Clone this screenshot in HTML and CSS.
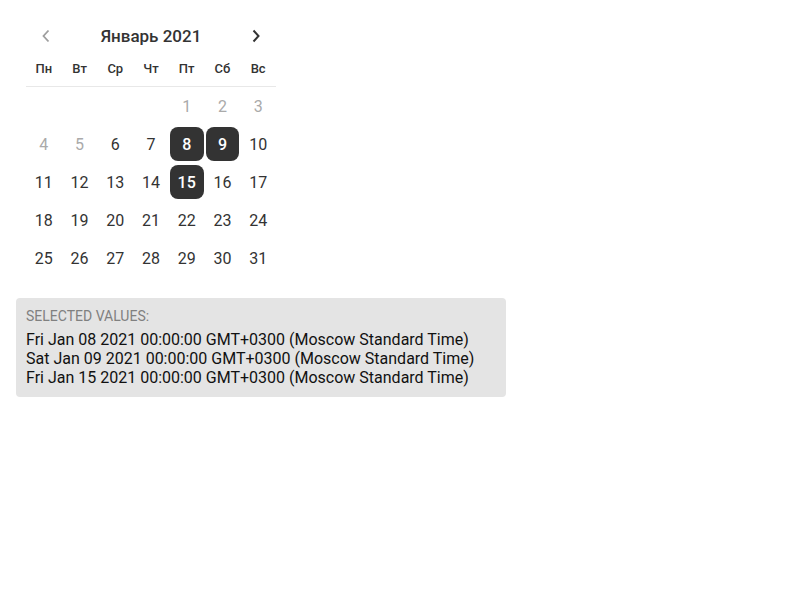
FILE: index.html
```html
<!DOCTYPE html>
<html lang="ru">
<head>
<meta charset="utf-8">
<link rel="stylesheet" href="styles.css">
</head>
<body>
<div class="calendar">
  <div class="cal-head">
    <button class="nav nav-prev" aria-label="prev">
      <svg width="10" height="14" viewBox="0 0 10 14"><path d="M7.5 1.5 L2.5 7 L7.5 12.5" fill="none" stroke="#9e9e9e" stroke-width="1.8"/></svg>
    </button>
    <div class="title">Январь 2021</div>
    <button class="nav nav-next" aria-label="next">
      <svg width="10" height="14" viewBox="0 0 10 14"><path d="M2.5 1.5 L7.5 7 L2.5 12.5" fill="none" stroke="#333" stroke-width="2"/></svg>
    </button>
  </div>
  <div class="weekdays">
    <span>Пн</span><span>Вт</span><span>Ср</span><span>Чт</span><span>Пт</span><span>Сб</span><span>Вс</span>
  </div>
  <div class="days">
    <span class="day empty"></span><span class="day empty"></span><span class="day empty"></span><span class="day empty"></span>
    <span class="day muted">1</span><span class="day muted">2</span><span class="day muted">3</span>
    <span class="day muted">4</span><span class="day muted">5</span><span class="day">6</span><span class="day">7</span>
    <span class="day selected">8</span><span class="day selected">9</span><span class="day">10</span>
    <span class="day">11</span><span class="day">12</span><span class="day">13</span><span class="day">14</span>
    <span class="day selected">15</span><span class="day">16</span><span class="day">17</span>
    <span class="day">18</span><span class="day">19</span><span class="day">20</span><span class="day">21</span>
    <span class="day">22</span><span class="day">23</span><span class="day">24</span>
    <span class="day">25</span><span class="day">26</span><span class="day">27</span><span class="day">28</span>
    <span class="day">29</span><span class="day">30</span><span class="day">31</span>
  </div>
</div>
<div class="values">
  <div class="label">SELECTED VALUES:</div>
  <div class="line">Fri Jan 08 2021 00:00:00 GMT+0300 (Moscow Standard Time)</div>
  <div class="line">Sat Jan 09 2021 00:00:00 GMT+0300 (Moscow Standard Time)</div>
  <div class="line">Fri Jan 15 2021 00:00:00 GMT+0300 (Moscow Standard Time)</div>
</div>
</body>
</html>
```
FILE: styles.css
```css
* { box-sizing: border-box; }
body {
  margin: 0;
  padding: 16px;
  font-family: Roboto, "Liberation Sans", sans-serif;
  color: #333;
  background: #fff;
}
.calendar {
  width: 270px;
  padding: 0 10px;
}
.cal-head {
  display: flex;
  align-items: center;
  justify-content: space-between;
  height: 40px;
}
.nav {
  width: 40px;
  height: 36px;
  border: 0;
  background: none;
  padding: 0;
  display: flex;
  align-items: center;
  justify-content: center;
}
.title {
  font-size: 17px;
  font-weight: 500;
  color: #333;
}
.weekdays {
  display: grid;
  grid-template-columns: repeat(7, 1fr);
  height: 22px;
  margin-top: 1px;
  align-items: center;
  margin-bottom: 7px;
  font-size: 13px;
  font-weight: 500;
  text-align: center;
}
.days {
  display: grid;
  grid-template-columns: repeat(7, 1fr);
  grid-auto-rows: 38px;
  border-top: 1px solid #e8e8e8;
}
.day {
  display: flex;
  align-items: center;
  justify-content: center;
  margin: 2px 1px;
  border-radius: 8px;
  font-size: 16px;
  color: #333;
}
.day.muted { color: #aaa; }
.day.selected {
  background: #333;
  color: #fff;
  font-weight: 500;
}
.values {
  margin-top: 21px;
  width: 490px;
  padding: 10px 10px 10px;
  background: #e4e4e4;
  border-radius: 4px;
}
.label {
  font-size: 14px;
  line-height: 16px;
  color: #808080;
  margin-bottom: 6px;
}
.line {
  font-size: 16px;
  line-height: 19px;
  color: #111;
}
```
